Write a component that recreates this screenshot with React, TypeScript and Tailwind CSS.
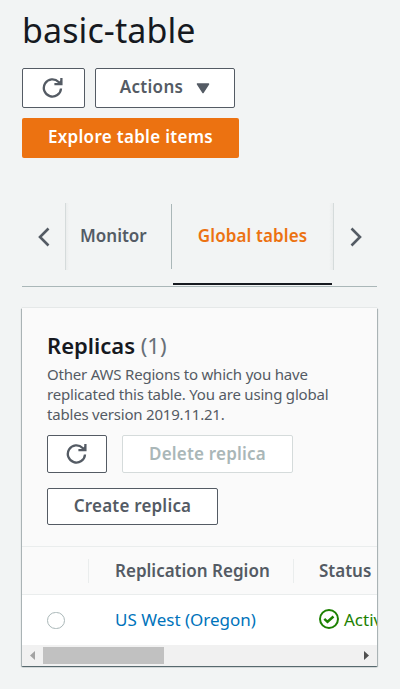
import React from "react";

function Refresh() {
  return (
    <svg width="22" height="22" viewBox="0 0 22 22" fill="none" stroke="#545b64" strokeWidth="2.3">
      <path d="M19 11.5A8.6 8.6 0 1 1 16.6 5l1.8 1.8" />
      <path d="M19.4 1v6.1h-7" />
      <path d="M20 2v5.5h-5.5z" fill="#545b64" stroke="none" />
    </svg>
  );
}

const button = "flex shrink-0 items-center justify-center rounded-[2px] border border-[#545b64] bg-white font-semibold text-[#545b64]";

export default function App() {
  return (
    <div className="h-[689px] w-[400px] overflow-hidden bg-[#f2f4f4] px-[22px] font-['Noto_Sans','Open_Sans',sans-serif] text-[17px] text-[#545b64]">
      <h1 className="h-[68px] pt-[9px] text-[34px] leading-[42px] tracking-[0.1px] whitespace-nowrap text-[#16191f]">basic-table</h1>
      <div className="flex gap-[10px]">
        <button className={`${button} h-10 w-[63px] pr-px`}><Refresh /></button>
        <button className={`${button} h-10 w-[140px] gap-[13px] pb-[2px]`}>
          <span className="tracking-[0.3px]">Actions</span>
          <svg width="14" height="11" viewBox="0 0 14 11" className="mt-[2px]"><path d="M1.5 1h11L7 9.5z" fill="#545b64" stroke="#545b64" strokeWidth="1.5" strokeLinejoin="round" /></svg>
        </button>
      </div>
      <button className="mt-[10px] flex h-10 w-[217px] items-center justify-center rounded-[2px] bg-[#ec7211] pb-[2px] font-semibold tracking-[0.3px] whitespace-nowrap text-white">Explore table items</button>

      <nav className="mt-[45px] flex h-[84px] w-[355px] border-b border-[#aab7b8]">
        <div className="flex h-[67px] w-[43px] items-center justify-center">
          <svg width="12" height="20" viewBox="0 0 12 20" fill="none" stroke="#545b64" strokeWidth="2.6"><path d="m10.5 1.5-8.5 8.5 8.5 8.5" /></svg>
        </div>
        <div className="h-[67px] w-[4px] border-l border-[#d5dbdb] bg-linear-to-r from-[#ebeded] to-[#f2f4f4]" />
        <div className="mt-px flex h-[65px] w-[103px] items-center border-r border-[#aab7b8] pb-[2px] pl-[11px] font-semibold">Monitor</div>
        <div className="ml-px h-[82px] w-[159px] border-b-2 border-[#16191f]">
          <div className="flex h-[67px] items-center justify-center pb-[2px] font-semibold tracking-[0.1px] whitespace-nowrap text-[#ec7211]">Global tables</div>
        </div>
        <div className="-ml-[3px] h-[67px] w-[5px] border-r border-[#d5dbdb] bg-linear-to-l from-[#ebeded] to-[#f2f4f4]" />
        <div className="flex h-[67px] w-[43px] items-center justify-center">
          <svg width="12" height="20" viewBox="0 0 12 20" fill="none" stroke="#545b64" strokeWidth="2.6"><path d="m1.5 1.5 8.5 8.5-8.5 8.5" /></svg>
        </div>
      </nav>

      <section className="mt-[21px] h-[358px] w-[355px] overflow-hidden bg-[#fafafa] shadow-[0_0_1px_rgba(0,28,36,0.3),0_1px_1px_rgba(0,28,36,0.4),1px_1px_1px_rgba(0,28,36,0.2),-1px_1px_1px_rgba(0,28,36,0.2)]">
        <div className="h-[238px] px-[25px] pt-[22px]">
          <h2 className="h-[34px] text-[22px] leading-[30px] font-semibold whitespace-nowrap text-[#16191f]">Replicas <span className="font-normal text-[#687078]">(1)</span></h2>
          <p className="text-[15px] leading-[20px] tracking-[-0.2px] whitespace-nowrap">Other AWS Regions to which you have<br />replicated this table. You are using global<br />tables version 2019.11.21.</p>
          <div className="mt-[11px] flex gap-[15px]">
            <button className={`${button} h-[38px] w-[60px]`}><Refresh /></button>
            <button className="flex h-[38px] w-[171px] items-center justify-center rounded-[2px] border border-[#d5dbdb] bg-white font-semibold tracking-[0.2px] whitespace-nowrap text-[#aab7b8]">Delete replica</button>
          </div>
          <button className={`${button} mt-[15px] h-[37px] w-[171px] pb-[2px] tracking-[0.2px] whitespace-nowrap`}>Create replica</button>
        </div>
        <div className="flex h-[49px] items-center border-y border-[#eaeded] font-semibold whitespace-nowrap">
          <div className="h-6 w-[67px] border-r border-[#eaeded]" />
          <div className="flex h-6 w-[205px] items-center border-r border-[#eaeded] pl-[26px]">Replication Region</div>
          <div className="pl-[25px]">Status</div>
        </div>
        <div className="flex h-[50px] items-center bg-white whitespace-nowrap">
          <div className="w-[93px] shrink-0 pl-[25px]"><div className="h-[17px] w-[18px] rounded-full border border-[#aab7b8]" /></div>
          <div className="w-[204px] shrink-0 text-[#0073bb]">US West (Oregon)</div>
          <svg width="20" height="20" viewBox="0 0 20 20" fill="none" stroke="#1d8102" strokeWidth="2" className="mb-[2px] shrink-0"><circle cx="10" cy="10" r="9" /><path d="m5.3 9.8 3.2 3 6-5.3" strokeWidth="2.5" /></svg>
          <span className="ml-[5px] text-[#1d8102]">Active</span>
        </div>
        <div className="flex h-[21px] items-center bg-[#f1f1f1]">
          <svg width="21" height="17" viewBox="0 0 21 17"><path d="M13 4v9L8 8.5z" fill="#a3a3a3" /></svg>
          <div className="h-[17px] w-[121px] bg-[#c1c1c1]" />
          <svg width="21" height="17" viewBox="0 0 21 17" className="ml-auto"><path d="M8 4v9l5-4.5z" fill="#505050" /></svg>
        </div>
      </section>
    </div>
  );
}
